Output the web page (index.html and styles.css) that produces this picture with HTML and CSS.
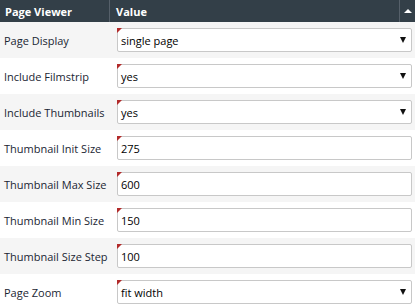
FILE: index.html
```html
<!DOCTYPE html>
<html lang="en">
<head>
    <meta charset="UTF-8">
    <title>Page Viewer</title>
    <link rel="stylesheet" href="styles.css">
</head>
<body>
    <div class="grid">
        <div class="head">
            <div class="hcell name">Page Viewer</div>
            <div class="hcell value">Value</div>
            <div class="hcell toggle"><span class="up"></span></div>
        </div>
        <div class="row odd">
            <div class="label">Page Display</div>
            <div class="field select"><span class="dirty"></span>single page<span class="arrow"></span></div>
        </div>
        <div class="row">
            <div class="label">Include Filmstrip</div>
            <div class="field select"><span class="dirty"></span>yes<span class="arrow"></span></div>
        </div>
        <div class="row odd">
            <div class="label">Include Thumbnails</div>
            <div class="field select"><span class="dirty"></span>yes<span class="arrow"></span></div>
        </div>
        <div class="row">
            <div class="label">Thumbnail Init Size</div>
            <div class="field"><span class="dirty"></span>275</div>
        </div>
        <div class="row odd">
            <div class="label">Thumbnail Max Size</div>
            <div class="field"><span class="dirty"></span>600</div>
        </div>
        <div class="row">
            <div class="label">Thumbnail Min Size</div>
            <div class="field"><span class="dirty"></span>150</div>
        </div>
        <div class="row odd">
            <div class="label">Thumbnail Size Step</div>
            <div class="field"><span class="dirty"></span>100</div>
        </div>
        <div class="row">
            <div class="label">Page Zoom</div>
            <div class="field select"><span class="dirty"></span>fit width<span class="arrow"></span></div>
        </div>
    </div>
</body>
</html>
```

FILE: styles.css
```css
body {
    margin: 0;
    font-family: 'Open Sans', sans-serif;
    font-size: 11px;
    color: #222;
    background: #fff;
}
.grid {
    width: 415px;
}
.head {
    display: flex;
    height: 22px;
    background: #333f48;
    color: #fff;
    font-weight: bold;
}
.hcell {
    display: flex;
    align-items: center;
}
.name {
    width: 104px;
    padding-left: 5px;
    border-right: 1px solid #56606a;
}
.value {
    flex: 1;
    padding-left: 6px;
    border-right: 1px solid #56606a;
}
.toggle {
    width: 15px;
    justify-content: center;
}
.up {
    width: 0;
    height: 0;
    border-left: 4px solid transparent;
    border-right: 4px solid transparent;
    border-bottom: 4px solid #fff;
}
.row {
    display: flex;
    align-items: center;
    height: 36px;
}
.row.odd {
    background: #f5f5f5;
}
.label {
    width: 106px;
    padding-left: 4px;
    white-space: nowrap;
    color: #1a2633;
}
.field {
    position: relative;
    display: flex;
    align-items: center;
    width: 290px;
    height: 22px;
    margin-left: 7px;
    padding-left: 3px;
    background: #fff;
    border: 1px solid #c8c8c8;
    border-radius: 2px;
    color: #000;
}
.dirty {
    position: absolute;
    top: -1px;
    left: -1px;
    width: 0;
    height: 0;
    border-top: 5px solid #b22a2a;
    border-right: 5px solid transparent;
}
.arrow {
    margin-left: auto;
    margin-right: 5px;
    width: 0;
    height: 0;
    border-left: 3.5px solid transparent;
    border-right: 3.5px solid transparent;
    border-top: 6px solid #111;
}
```
